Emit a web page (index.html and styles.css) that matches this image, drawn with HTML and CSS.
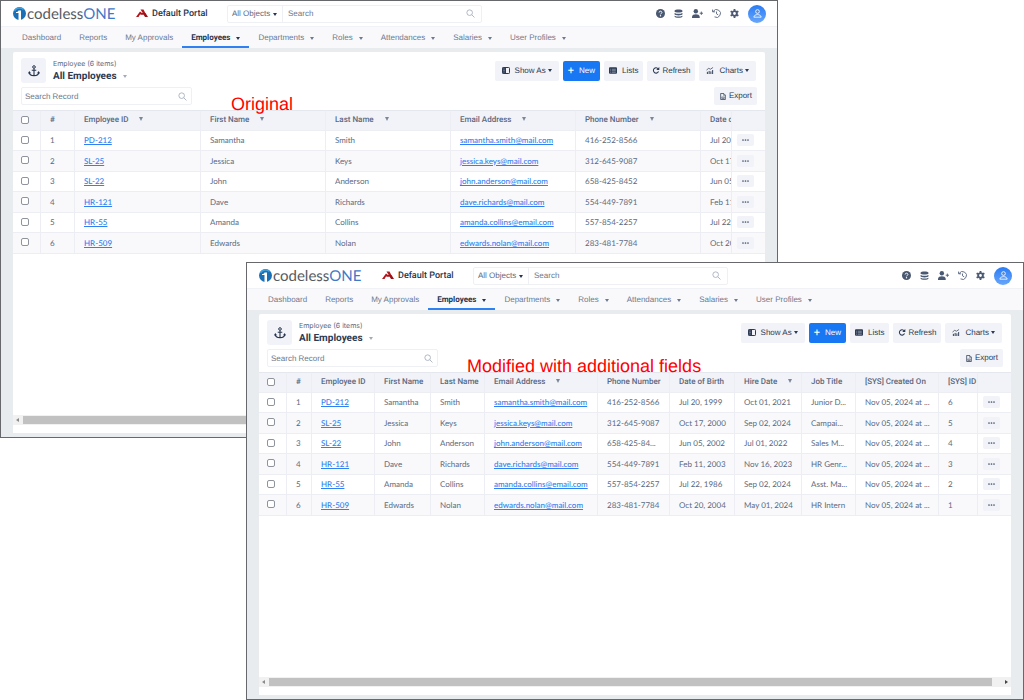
FILE: index.html
```html
<!DOCTYPE html>
<html lang="en">
<head>
<meta charset="utf-8">
<title>All Employees</title>
<link rel="stylesheet" href="styles.css">
</head>
<body>
<svg class="sprite" aria-hidden="true">
  <symbol id="i-mark" viewBox="0 0 26 26"><circle cx="13" cy="13" r="13" fill="#1b6fb5"/><path d="M3 8a11.500 11.500 0 0 1 18-3" fill="none" stroke="#43a0dc" stroke-width="3"/><path d="M6 10c3 0 4-1 5-3h5v19h-5V12H6z" fill="#fff"/></symbol>
  <symbol id="i-portal" viewBox="0 0 24 18"><path d="M9 1h6l4 8h-5z" fill="#b3151b"/><path d="M8 5l8 6H8l-3 5H0z" fill="#b3151b"/><path d="M13 8h6l5 8h-6l-3-5H9z" fill="#9c1016"/></symbol>
  <symbol id="i-search" viewBox="0 0 16 16"><circle cx="6.500" cy="6.500" r="5" fill="none" stroke="currentColor" stroke-width="1.500"/><path d="M10.500 10.500L15 15" stroke="currentColor" stroke-width="1.500" fill="none"/></symbol>
  <symbol id="i-help" viewBox="0 0 16 16"><circle cx="8" cy="8" r="8" fill="currentColor"/><path d="M5.500 6.300c0-3.200 5-3.200 5 0 0 1.700-2.500 1.700-2.500 3.300" fill="none" stroke="#fff" stroke-width="1.700"/><circle cx="8" cy="12" r="1.200" fill="#fff"/></symbol>
  <symbol id="i-db" viewBox="0 0 16 16"><path d="M1 3c0-3 14-3 14 0v1.500c0 2.500-14 2.500-14 0zM1 7c3 2 11 2 14 0v2.500c0 2.500-14 2.500-14 0zM1 12c3 2 11 2 14 0v1.500c0 3-14 3-14 0z" fill="currentColor"/></symbol>
  <symbol id="i-useradd" viewBox="0 0 20 16"><circle cx="7" cy="4" r="4" fill="currentColor"/><path d="M0 16v-2c0-6 14-6 14 0v2z" fill="currentColor"/><path d="M17 4.500v6M14 7.500h6" stroke="currentColor" stroke-width="1.600"/></symbol>
  <symbol id="i-history" viewBox="0 0 16 16"><path d="M2 4.500A7 7 0 1 1 4.500 14M1 1v4h4.500M8 4.500V8.500l3 2" fill="none" stroke="currentColor" stroke-width="1.500"/></symbol>
  <symbol id="i-gear" viewBox="0 0 16 16"><circle cx="8" cy="8" r="4.200" fill="none" stroke="currentColor" stroke-width="3.400"/><path d="M8 0v3M8 13v3M1.100 4l2.600 1.500M12.300 10.500l2.600 1.500M1.100 12l2.600-1.500M12.300 5.500L14.900 4" stroke="currentColor" stroke-width="3.200"/></symbol>
  <symbol id="i-person" viewBox="0 0 16 16"><circle cx="8" cy="4.500" r="3.300" fill="none" stroke="currentColor" stroke-width="1.500"/><path d="M1.500 14.500c0-6 13-6 13 0z" fill="none" stroke="currentColor" stroke-width="1.500"/></symbol>
  <symbol id="i-anchor" viewBox="0 0 24 24"><circle cx="12" cy="4" r="2.600" fill="none" stroke="currentColor" stroke-width="2"/><path d="M12 7v14M7.500 10.500h9M2.500 14.500c0 9 19 9 19 0" fill="none" stroke="currentColor" stroke-width="2.200"/><path d="M0 17l2.500-5L6 16.500zM24 17l-2.500-5L18 16.500z" fill="currentColor"/></symbol>
  <symbol id="i-panel" viewBox="0 0 16 14"><rect x="1" y="1" width="14" height="12" rx="1.500" fill="none" stroke="currentColor" stroke-width="2"/><path d="M1 1h7v12H1z" fill="currentColor"/><path d="M3 4h2M3 7h2M3 10h2" stroke="#fff"/></symbol>
  <symbol id="i-list" viewBox="0 0 16 13"><rect width="16" height="13" rx="2" fill="currentColor"/><path d="M2.500 4h2M6 4h7.500M2.500 7h2M6 7h7.500M2.500 10h2M6 10h7.500" stroke="#aeb7c6" stroke-width="1.300"/></symbol>
  <symbol id="i-refresh" viewBox="0 0 16 16"><path d="M13 4.500A6 6 0 1 0 13.700 10" fill="none" stroke="currentColor" stroke-width="2.400"/><path d="M15.500 0v7H8.500z" fill="currentColor"/></symbol>
  <symbol id="i-chart" viewBox="0 0 16 16"><path d="M2 16v-5M6 16V9M10 16v-6M14 16V7" stroke="currentColor" stroke-width="2.200"/><path d="M0 7l5-4 4 2 6-4" fill="none" stroke="currentColor" stroke-width="1.600"/></symbol>
  <symbol id="i-file" viewBox="0 0 12 15"><path d="M1 1h6.500L11 4.500V14H1z" fill="none" stroke="currentColor" stroke-width="1.600"/><path d="M7 1v4h4" fill="none" stroke="currentColor"/><path d="M3.500 11V8M6 11V7M8.500 11V8M3 12h6" stroke="currentColor" stroke-width="1.300"/></symbol>
  <symbol id="i-dots" viewBox="0 0 14 4"><circle cx="2" cy="2" r="1.700" fill="currentColor"/><circle cx="7" cy="2" r="1.700" fill="currentColor"/><circle cx="12" cy="2" r="1.700" fill="currentColor"/></symbol>
</svg>

<div class="desktop">
  <section class="window window-back">
    <header class="topbar">
      <a class="brand" href="#"><svg class="brand-mark"><use href="#i-mark"/></svg><span>codeless<b>ONE</b></span></a>
      <a class="portal" href="#"><svg><use href="#i-portal"/></svg>Default Portal</a>
      <div class="finder">
        <label class="scope"><select aria-label="Object scope"><option>All Objects</option></select></label>
        <input type="search" placeholder="Search" aria-label="Search">
        <svg><use href="#i-search"/></svg>
      </div>
      <div class="tools">
        <button aria-label="Help"><svg><use href="#i-help"/></svg></button>
        <button aria-label="Data"><svg><use href="#i-db"/></svg></button>
        <button class="wide" aria-label="Add user"><svg><use href="#i-useradd"/></svg></button>
        <button aria-label="History"><svg><use href="#i-history"/></svg></button>
        <button aria-label="Settings"><svg><use href="#i-gear"/></svg></button>
        <button class="avatar" aria-label="Profile"><svg><use href="#i-person"/></svg></button>
      </div>
    </header>
    <nav class="tabs">
      <a href="#">Dashboard</a><a href="#">Reports</a><a href="#">My Approvals</a><a class="drop active" href="#">Employees</a><a class="drop" href="#">Departments</a><a class="drop" href="#">Roles</a><a class="drop" href="#">Attendances</a><a class="drop" href="#">Salaries</a><a class="drop" href="#">User Profiles</a>
    </nav>
    <main class="card">
      <div class="card-head">
        <div class="badge"><svg><use href="#i-anchor"/></svg></div>
        <div class="titles"><p>Employee (6 items)</p><h1 class="drop">All Employees</h1></div>
        <div class="actions">
          <button class="btn drop"><svg><use href="#i-panel"/></svg>Show As</button>
          <button class="btn primary"><i>+</i>New</button>
          <button class="btn tight"><svg><use href="#i-list"/></svg>Lists</button>
          <button class="btn tight near"><svg><use href="#i-refresh"/></svg>Refresh</button>
          <button class="btn drop"><svg><use href="#i-chart"/></svg>Charts</button>
        </div>
      </div>
      <div class="card-sub">
        <div class="record-search"><input type="search" placeholder="Search Record" aria-label="Search Record"><svg><use href="#i-search"/></svg></div>
        <button class="btn tight near export"><svg><use href="#i-file"/></svg>Export</button>
      </div>
      <table>
        <colgroup><col class="w28"><col class="w34"><col class="w126"><col class="w125"><col class="w125"><col class="w125"><col class="w125"><col class="w31"><col></colgroup>
        <thead><tr><th><input type="checkbox" aria-label="Select all"></th><th>#</th><th class="sort">Employee ID</th><th class="sort">First Name</th><th class="sort">Last Name</th><th class="sort">Email Address</th><th class="sort">Phone Number</th><th>Date o</th><th></th></tr></thead>
        <tbody>
          <tr><td><input type="checkbox" aria-label="Select row 1"></td><td>1</td><td><a href="#">PD-212</a></td><td>Samantha</td><td>Smith</td><td><a href="#">samantha.smith@mail.com</a></td><td>416-252-8566</td><td>Jul 20</td><td><button class="more" aria-label="Row actions"><svg><use href="#i-dots"/></svg></button></td></tr>
          <tr><td><input type="checkbox" aria-label="Select row 2"></td><td>2</td><td><a href="#">SL-25</a></td><td>Jessica</td><td>Keys</td><td><a href="#">jessica.keys@mail.com</a></td><td>312-645-9087</td><td>Oct 17</td><td><button class="more" aria-label="Row actions"><svg><use href="#i-dots"/></svg></button></td></tr>
          <tr><td><input type="checkbox" aria-label="Select row 3"></td><td>3</td><td><a href="#">SL-22</a></td><td>John</td><td>Anderson</td><td><a href="#">john.anderson@mail.com</a></td><td>658-425-8452</td><td>Jun 05</td><td><button class="more" aria-label="Row actions"><svg><use href="#i-dots"/></svg></button></td></tr>
          <tr><td><input type="checkbox" aria-label="Select row 4"></td><td>4</td><td><a href="#">HR-121</a></td><td>Dave</td><td>Richards</td><td><a href="#">dave.richards@mail.com</a></td><td>554-449-7891</td><td>Feb 11</td><td><button class="more" aria-label="Row actions"><svg><use href="#i-dots"/></svg></button></td></tr>
          <tr><td><input type="checkbox" aria-label="Select row 5"></td><td>5</td><td><a href="#">HR-55</a></td><td>Amanda</td><td>Collins</td><td><a href="#">amanda.collins@email.com</a></td><td>557-854-2257</td><td>Jul 22</td><td><button class="more" aria-label="Row actions"><svg><use href="#i-dots"/></svg></button></td></tr>
          <tr><td><input type="checkbox" aria-label="Select row 6"></td><td>6</td><td><a href="#">HR-509</a></td><td>Edwards</td><td>Nolan</td><td><a href="#">edwards.nolan@mail.com</a></td><td>283-481-7784</td><td>Oct 20</td><td><button class="more" aria-label="Row actions"><svg><use href="#i-dots"/></svg></button></td></tr>
        </tbody>
      </table>
      <div class="scroller"><span class="arrow left"></span><span class="thumb"></span><span class="arrow right"></span></div>
    </main>
    <p class="caption caption-original">Original</p>
  </section>

  <section class="window window-front">
    <header class="topbar">
      <a class="brand" href="#"><svg class="brand-mark"><use href="#i-mark"/></svg><span>codeless<b>ONE</b></span></a>
      <a class="portal" href="#"><svg><use href="#i-portal"/></svg>Default Portal</a>
      <div class="finder">
        <label class="scope"><select aria-label="Object scope"><option>All Objects</option></select></label>
        <input type="search" placeholder="Search" aria-label="Search">
        <svg><use href="#i-search"/></svg>
      </div>
      <div class="tools">
        <button aria-label="Help"><svg><use href="#i-help"/></svg></button>
        <button aria-label="Data"><svg><use href="#i-db"/></svg></button>
        <button class="wide" aria-label="Add user"><svg><use href="#i-useradd"/></svg></button>
        <button aria-label="History"><svg><use href="#i-history"/></svg></button>
        <button aria-label="Settings"><svg><use href="#i-gear"/></svg></button>
        <button class="avatar" aria-label="Profile"><svg><use href="#i-person"/></svg></button>
      </div>
    </header>
    <nav class="tabs">
      <a href="#">Dashboard</a><a href="#">Reports</a><a href="#">My Approvals</a><a class="drop active" href="#">Employees</a><a class="drop" href="#">Departments</a><a class="drop" href="#">Roles</a><a class="drop" href="#">Attendances</a><a class="drop" href="#">Salaries</a><a class="drop" href="#">User Profiles</a>
    </nav>
    <main class="card">
      <div class="card-head">
        <div class="badge"><svg><use href="#i-anchor"/></svg></div>
        <div class="titles"><p>Employee (6 items)</p><h1 class="drop">All Employees</h1></div>
        <div class="actions">
          <button class="btn drop"><svg><use href="#i-panel"/></svg>Show As</button>
          <button class="btn primary"><i>+</i>New</button>
          <button class="btn tight"><svg><use href="#i-list"/></svg>Lists</button>
          <button class="btn tight near"><svg><use href="#i-refresh"/></svg>Refresh</button>
          <button class="btn drop"><svg><use href="#i-chart"/></svg>Charts</button>
        </div>
      </div>
      <div class="card-sub">
        <div class="record-search"><input type="search" placeholder="Search Record" aria-label="Search Record"><svg><use href="#i-search"/></svg></div>
        <button class="btn tight near export"><svg><use href="#i-file"/></svg>Export</button>
      </div>
      <table>
        <colgroup><col class="w28"><col class="w25"><col class="w63"><col class="w56"><col class="w54"><col class="w113"><col class="w72"><col class="w65"><col class="w67"><col class="w54"><col class="w83"><col class="w39"><col></colgroup>
        <thead><tr><th><input type="checkbox" aria-label="Select all"></th><th>#</th><th>Employee ID</th><th>First Name</th><th>Last Name</th><th class="sort">Email Address</th><th>Phone Number</th><th>Date of Birth</th><th class="sort">Hire Date</th><th>Job Title</th><th>[SYS] Created On</th><th>[SYS] ID</th><th></th></tr></thead>
        <tbody>
          <tr><td><input type="checkbox" aria-label="Select row 1"></td><td>1</td><td><a href="#">PD-212</a></td><td>Samantha</td><td>Smith</td><td><a href="#">samantha.smith@mail.com</a></td><td>416-252-8566</td><td>Jul 20, 1999</td><td>Oct 01, 2021</td><td>Junior D...</td><td>Nov 05, 2024 at ...</td><td>6</td><td><button class="more" aria-label="Row actions"><svg><use href="#i-dots"/></svg></button></td></tr>
          <tr><td><input type="checkbox" aria-label="Select row 2"></td><td>2</td><td><a href="#">SL-25</a></td><td>Jessica</td><td>Keys</td><td><a href="#">jessica.keys@mail.com</a></td><td>312-645-9087</td><td>Oct 17, 2000</td><td>Sep 02, 2024</td><td>Campai...</td><td>Nov 05, 2024 at ...</td><td>5</td><td><button class="more" aria-label="Row actions"><svg><use href="#i-dots"/></svg></button></td></tr>
          <tr><td><input type="checkbox" aria-label="Select row 3"></td><td>3</td><td><a href="#">SL-22</a></td><td>John</td><td>Anderson</td><td><a href="#">john.anderson@mail.com</a></td><td>658-425-84...</td><td>Jun 05, 2002</td><td>Jul 01, 2022</td><td>Sales M...</td><td>Nov 05, 2024 at ...</td><td>4</td><td><button class="more" aria-label="Row actions"><svg><use href="#i-dots"/></svg></button></td></tr>
          <tr><td><input type="checkbox" aria-label="Select row 4"></td><td>4</td><td><a href="#">HR-121</a></td><td>Dave</td><td>Richards</td><td><a href="#">dave.richards@mail.com</a></td><td>554-449-7891</td><td>Feb 11, 2003</td><td>Nov 16, 2023</td><td>HR Genr...</td><td>Nov 05, 2024 at ...</td><td>3</td><td><button class="more" aria-label="Row actions"><svg><use href="#i-dots"/></svg></button></td></tr>
          <tr><td><input type="checkbox" aria-label="Select row 5"></td><td>5</td><td><a href="#">HR-55</a></td><td>Amanda</td><td>Collins</td><td><a href="#">amanda.collins@email.com</a></td><td>557-854-2257</td><td>Jul 22, 1986</td><td>Sep 02, 2024</td><td>Asst. Ma...</td><td>Nov 05, 2024 at ...</td><td>2</td><td><button class="more" aria-label="Row actions"><svg><use href="#i-dots"/></svg></button></td></tr>
          <tr><td><input type="checkbox" aria-label="Select row 6"></td><td>6</td><td><a href="#">HR-509</a></td><td>Edwards</td><td>Nolan</td><td><a href="#">edwards.nolan@mail.com</a></td><td>283-481-7784</td><td>Oct 20, 2004</td><td>May 01, 2024</td><td>HR Intern</td><td>Nov 05, 2024 at ...</td><td>1</td><td><button class="more" aria-label="Row actions"><svg><use href="#i-dots"/></svg></button></td></tr>
        </tbody>
      </table>
      <div class="scroller"><span class="arrow left"></span><span class="thumb"></span><span class="arrow right"></span></div>
    </main>
    <p class="caption caption-modified">Modified with additional fields</p>
  </section>
</div>
</body>
</html>
```
FILE: styles.css
```css
* { box-sizing: border-box; margin: 0; }
body { font: 8px/12px "Liberation Sans", Arial, sans-serif; color: #5c6a80; background: #fff; text-rendering: geometricPrecision; }
a { color: inherit; text-decoration: none; }
button, input, select { font: inherit; color: inherit; border: 0; padding: 0; background: none; text-rendering: inherit; }
svg { display: block; flex: none; }
.sprite { position: absolute; width: 0; height: 0; }

.desktop { display: grid; grid-template: 262px 1fr 262px / 246px 1fr 246px; min-height: 100vh; }
.window { position: relative; display: flex; flex-direction: column; min-width: 0; border: 1px solid #66686c; background: #e8ecef; }
.window-back { grid-area: 1 / 1 / 3 / 3; }
.window-front { grid-area: 2 / 2 / 4 / 4; }

.topbar { display: flex; align-items: center; height: 26px; padding: 0 11px 0 12px; background: #fff; border-bottom: 1px solid #f1f2f5; }
.brand { display: flex; align-items: center; gap: 1px; width: 101px; margin-right: 22px; font: 15px/20px Lato, sans-serif; color: #555a60; }
.brand b { font-weight: 400; color: #3f78c8; }
.brand-mark { width: 13px; height: 13px; }
.portal { display: flex; align-items: center; gap: 4px; width: 70px; font: 500 9px/12px Roboto, sans-serif; color: #26344d; white-space: nowrap; }
.portal svg { width: 12px; height: 9px; }
.finder { display: flex; align-items: center; width: 255px; height: 18px; margin-left: 21px; padding-right: 6px; border: 1px solid #eef0f4; border-radius: 2px; }
.scope { position: relative; display: flex; width: 55px; height: 100%; border-right: 1px solid #eef0f4; }
.scope select { appearance: none; width: 100%; padding-left: 4px; }
.scope::after { content: ""; position: absolute; right: 5px; top: 7px; border: 2px solid transparent; border-top: 3px solid #26344d; border-bottom: 0; }
.finder input { flex: 1; min-width: 0; padding-left: 5px; outline: 0; }
.finder svg, .record-search svg { width: 9px; height: 9px; color: #a3abba; }
::placeholder { color: #6c788b; opacity: 1; }
.tools { display: flex; align-items: center; gap: 9px; margin-left: auto; color: #4a5872; }
.tools svg { width: 9px; height: 9px; }
.tools .wide svg { width: 11px; }
.tools .avatar { display: grid; place-items: center; width: 18px; height: 18px; border-radius: 50%; color: #fff; background: linear-gradient(#2a7cf4, #68a6fa); }

.tabs { display: flex; height: 21px; padding-left: 12px; background: #f9f9fc; color: #6d7a8f; }
.tabs a { display: flex; align-items: center; padding: 1px 9px 0; white-space: nowrap; }
.tabs .active { color: #26344d; font-family: Roboto, sans-serif; font-weight: 700; box-shadow: inset 0 -2px #2f80f0; }
.drop::after { content: ""; flex: none; margin-left: 6px; border: 2px solid transparent; border-top: 3px solid currentColor; border-bottom: 0; }

.card { display: flex; flex-direction: column; flex: 1; margin: 4px 12px; background: #fff; border-radius: 2px 2px 0 0; }
.card-head { display: flex; align-items: center; padding: 6px 9px 4px 8px; }
.badge { display: grid; place-items: center; width: 25px; height: 25px; border-radius: 3px; background: #f1f3f8; color: #26344d; }
.badge svg { width: 12px; height: 12px; }
.titles { margin-left: 7px; }
.titles p { font: 7px/12px Inter, sans-serif; }
.titles h1 { display: flex; align-items: center; font: 700 10px/13px Roboto, sans-serif; color: #2c3a52; }
.titles h1::after { color: #a3abba; }
.actions { display: flex; gap: 4px; margin-left: auto; }
.btn { display: flex; align-items: center; height: 20px; padding: 0 7px; gap: 5px; border-radius: 2px; background: #f1f3f8; color: #2c3a52; white-space: nowrap; }
.btn.drop::after { margin-left: -3px; }
.btn svg { width: 8px; height: 7px; }
.btn.tight { padding: 0 5px; }
.btn.near { gap: 2px; }
.btn.primary { padding: 0 5px; background: #1877f2; color: #fff; }
.btn i { font: 11px/12px Roboto, sans-serif; }
.btn.export { height: 18px; }
.card-sub { display: flex; justify-content: space-between; padding: 0 8px 5px; }
.record-search { display: flex; align-items: center; width: 171px; height: 18px; padding: 1px 4px 0 3px; border: 1px solid #eef0f4; border-radius: 2px; }
.record-search input { flex: 1; min-width: 0; outline: 0; }

table { width: 100%; table-layout: fixed; border-collapse: separate; border-spacing: 0; font-family: Lato, "Liberation Sans", sans-serif; }
th, td { padding: 0 0 1px 9px; border-right: 1px solid #eceef3; border-bottom: 1px solid #eceef3; text-align: left; white-space: nowrap; overflow: hidden; }
th { height: 21px; background: #f1f3f8; font-family: Roboto, sans-serif; font-weight: 500; color: #5a6880; border-top: 1px solid #e4e7ed; }
td { height: 20px; }
tr:nth-child(even) td { height: 21px; background: #f9f9fc; }
th:last-child, td:last-child { border-right: 0; padding-left: 5px; }
td a { color: #2f80f0; font-weight: 500; text-decoration: underline; }
.sort::after { content: ""; display: inline-block; margin-left: 11px; vertical-align: 1px; border: 2px solid transparent; border-top: 4px solid #7c879a; border-bottom: 0; }
td input, th input { display: block; appearance: none; width: 8px; height: 8px; margin: 0 0 1px -1px; border: 1px solid #8f949c; border-radius: 2px; background: #fff; }
.more { display: grid; place-items: center; width: 17px; height: 12px; border-radius: 2px; background: #f1f3f8; color: #4a5872; }
.more svg { width: 7px; height: 2px; }
.w25 { width: 25px; } .w28 { width: 28px; } .w31 { width: 31px; } .w34 { width: 34px; } .w39 { width: 39px; }
.w54 { width: 54px; } .w56 { width: 56px; } .w63 { width: 63px; } .w65 { width: 65px; } .w67 { width: 67px; }
.w72 { width: 72px; } .w83 { width: 83px; } .w113 { width: 113px; } .w125 { width: 125px; } .w126 { width: 126px; }

.scroller { display: flex; align-items: center; height: 10px; margin: auto 0 8px; padding: 0 3px; background: #f1f1f1; }
.thumb { flex: 1; height: 8px; margin: 0 13px 0 4px; background: #c1c1c1; }
.arrow { border: 2px solid transparent; }
.arrow.left { border-right: 3px solid #8b8b8b; border-left: 0; }
.arrow.right { border-left: 3px solid #444; border-right: 0; }

.caption { position: absolute; font: 18px/20px "Liberation Sans", Arial, sans-serif; color: #f00; white-space: nowrap; }
.caption-original { left: 230px; top: 93px; }
.caption-modified { left: 220px; top: 93px; }
```
